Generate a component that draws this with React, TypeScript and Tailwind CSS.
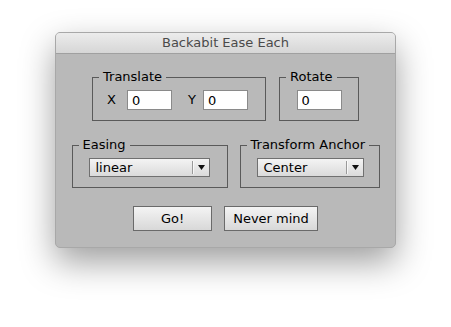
import React, { useState } from "react"

const font = { fontFamily: '"DejaVu Sans", "Liberation Sans", sans-serif' }

function Group({ label, className, children }: { label: string; className: string; children: React.ReactNode }) {
  return (
    <fieldset className={`border border-[#5a5a5a] ${className}`}>
      <legend className="ml-[6px] px-[4px] text-[13px] leading-[16px] text-black">{label}</legend>
      {children}
    </fieldset>
  )
}

function Select({ value, className }: { value: string; className: string }) {
  return (
    <div className={`flex h-[19px] items-stretch border border-[#707070] bg-gradient-to-b from-[#f4f4f4] to-[#dadada] ${className}`}>
      <span className="flex-1 pl-[6px] text-[13px] leading-[17px] text-black">{value}</span>
      <div className="my-[2px] w-[2px] border-l border-[#9a9a9a] bg-white/70" />
      <div className="flex w-[15px] items-center justify-center">
        <svg width="7" height="5" viewBox="0 0 7 5">
          <path d="M0 0 H7 L3.5 5 Z" fill="#111" />
        </svg>
      </div>
    </div>
  )
}

function Input({ value, onChange }: { value: string; onChange: (v: string) => void }) {
  return (
    <input
      value={value}
      onChange={(e) => onChange(e.target.value)}
      className="h-[20px] w-[45px] border border-[#8a8a8a] bg-white px-[4px] text-[13px] leading-[18px] text-black outline-none"
      style={font}
    />
  )
}

export default function App() {
  const [x, setX] = useState("0")
  const [y, setY] = useState("0")
  const [rot, setRot] = useState("0")

  return (
    <div className="h-[327px] w-[451px] bg-white pl-[55px] pt-[32px]" style={font}>
      <div className="w-[341px] overflow-hidden rounded-[5px] border border-[#a8a8a8] bg-[#b9b9b9] shadow-[0_14px_34px_rgba(0,0,0,0.38)]">
        {/* Title bar */}
        <div className="flex h-[21px] items-center justify-center border-b border-[#a0a0a0] bg-gradient-to-b from-[#ececec] to-[#d6d6d6]">
          <span className="text-[13px] text-[#4a4a4a]">Backabit Ease Each</span>
        </div>

        <div className="flex flex-col items-center pb-[16px] pt-[15px]">
          {/* Row 1 */}
          <div className="flex gap-[13px]">
            <Group label="Translate" className="w-[174px]">
              <div className="flex items-center pb-[10px] pl-[14px] pt-[5px] text-[13px] text-black">
                <span className="w-[20px]">X</span>
                <Input value={x} onChange={setX} />
                <span className="ml-[16px] w-[15px]">Y</span>
                <Input value={y} onChange={setY} />
              </div>
            </Group>
            <Group label="Rotate" className="w-[80px]">
              <div className="flex justify-center pb-[10px] pt-[5px]">
                <Input value={rot} onChange={setRot} />
              </div>
            </Group>
          </div>

          {/* Row 2 */}
          <div className="mt-[16px] flex gap-[12px]">
            <Group label="Easing" className="w-[156px]">
              <div className="pb-[10px] pl-[16px] pt-[5px]">
                <Select value="linear" className="w-[121px]" />
              </div>
            </Group>
            <Group label="Transform Anchor" className="w-[140px]">
              <div className="pb-[10px] pl-[16px] pt-[5px]">
                <Select value="Center" className="w-[107px]" />
              </div>
            </Group>
          </div>

          {/* Buttons */}
          <div className="mt-[18px] flex gap-[12px]">
            <button className="h-[25px] w-[79px] border border-[#6a6a6a] bg-gradient-to-b from-[#f4f4f4] to-[#d8d8d8] text-[13px] text-black">
              Go!
            </button>
            <button className="h-[25px] w-[94px] border border-[#6a6a6a] bg-gradient-to-b from-[#f4f4f4] to-[#d8d8d8] text-[13px] text-black">
              Never mind
            </button>
          </div>
        </div>
      </div>
    </div>
  )
}
